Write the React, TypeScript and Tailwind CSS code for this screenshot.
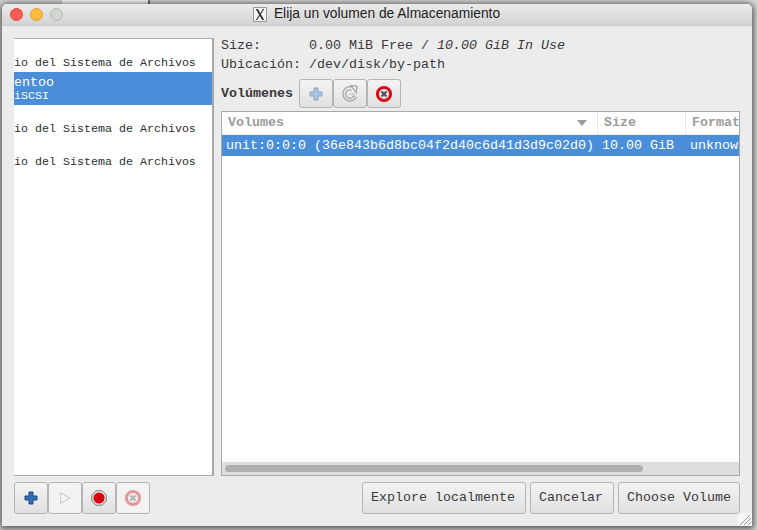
const mono = "font-['Liberation_Mono',monospace]";

function Plus({ c1, c2 }: { c1: string; c2: string }) {
  return (
    <svg width="14" height="14" viewBox="0 0 14 14">
      <path d="M5 1h4v4h4v4H9v4H5V9H1V5h4z" fill={c1} stroke={c2} strokeWidth="1" />
    </svg>
  );
}
function Reload() {
  return (
    <svg width="20" height="20" viewBox="0 0 20 20" fill="none">
      <path d="M16.5 13A7.2 7.2 0 1 1 13.5 3.5" stroke="#a4a4a4" strokeWidth="1.3" />
      <path d="M14 11.5A4.3 4.3 0 1 1 11.5 6.2" stroke="#a4a4a4" strokeWidth="1.3" />
      <path d="M15 11.5v1.5M10 10h5" stroke="#b8b8b8" strokeWidth="1" />
      <path d="M11 1.5l6 .8-.8 6.2z" fill="#f4f4f4" stroke="#a0a0a0" strokeWidth="1.2" />
    </svg>
  );
}
function Stop({ faded = false }: { faded?: boolean }) {
  return (
    <svg width="18" height="18" viewBox="0 0 18 18" className={faded ? "opacity-40" : ""}>
      <circle cx="9" cy="9" r="6.6" fill="#e8e8e8" stroke="#d40f1c" strokeWidth="3" />
      <path d="M6.5 6.5l5 5M11.5 6.5l-5 5" stroke="#555" strokeWidth="2.2" />
    </svg>
  );
}
function Record() {
  return (
    <svg width="16" height="16" viewBox="0 0 16 16">
      <path d="M5 .8h6L15.2 5v6L11 15.2H5L.8 11V5z" fill="#e8e8e8" stroke="#777" />
      <circle cx="8" cy="8" r="5.6" fill="#d8000c" />
    </svg>
  );
}
function Play() {
  return (
    <svg width="12" height="14" viewBox="0 0 12 14" fill="#f4f4f4" stroke="#cfcfcf" strokeWidth="1.2">
      <path d="M1.5 1.5l9.5 5.5-9.5 5.5z" />
    </svg>
  );
}

function IconBtn({ children, disabled, h }: { children: React.ReactNode; disabled?: boolean; h: string }) {
  return (
    <div
      className={`${h} w-[34px] flex items-center justify-center rounded-[3px] border border-[#b4b4b4] ${
        disabled ? "bg-[#f3f3f3]" : "bg-gradient-to-b from-[#f4f4f4] to-[#e0e0e0]"
      }`}
    >
      {children}
    </div>
  );
}

function TextBtn({ label, w }: { label: string; w: string }) {
  return (
    <div className={`${w} h-[32px] flex items-center justify-center rounded-[3px] border border-[#b4b4b4] bg-gradient-to-b from-[#f3f3f3] to-[#e0e0e0] text-[13.33px] text-[#3a3a3a]`}>
      {label}
    </div>
  );
}

export default function App() {
  return (
    <div className={`${mono} relative w-[757px] h-[530px] overflow-hidden bg-[#d8d8d8] pl-[2px] pt-[4px]`}>
      <div className="absolute left-[62px] top-0 w-[88px] h-[4px] bg-white border-r-2 border-[#777]" />
      <div className="relative w-[750px] h-[522px] rounded-t-[5px] bg-[#ececec] flex flex-col shadow-[0_1px_6px_2px_rgba(0,0,0,0.6)]">
        <div className="h-[22px] shrink-0 rounded-t-[5px] bg-gradient-to-b from-[#ebebeb] to-[#d3d3d3] flex items-center relative border-b border-[#cbcbcb]">
          <div className="flex items-center gap-[7px] pl-[8px]">
            <div className="w-[13px] h-[13px] rounded-full bg-[#fc5b57] border border-[#e0443e]" />
            <div className="w-[13px] h-[13px] rounded-full bg-[#fdbc40] border border-[#dea123]" />
            <div className="w-[13px] h-[13px] rounded-full bg-[#d4d4d4] border border-[#a9c1a5]" />
          </div>
          <div className="flex-1 flex items-center justify-center gap-[7px] font-['Liberation_Sans',sans-serif] text-[13.8px] text-[#222]">
            <svg width="14" height="15" viewBox="0 0 14 15" className="border border-[#999] bg-[#f4f4f4]">
              <path d="M2 1h2.5L12 14H9.5zM10.5 1H12L3.5 14H2z" fill="#333" />
            </svg>
            <span>Elija un volumen de Almacenamiento</span>
          </div>
          <div className="w-[62px]" />
        </div>

        <div className="flex-1 flex gap-[7px] pl-[12px] pr-[12px] pt-[12px]">
          <div className="w-[200px] h-[438px] bg-white border-y border-r-2 border-[#a9a9a9] overflow-hidden">
            <div className="pt-[6px]">
              <div className="h-[27px] flex items-end text-[11.67px] text-[#2e2e2e]">io del Sistema de Archivos</div>
              <div className="h-[33px] bg-[#4a8ed9] text-white flex flex-col justify-center">
                <div className="text-[13.33px] leading-[15px]">entoo</div>
                <div className="text-[11.67px] leading-[12px]">iSCSI</div>
              </div>
              <div className="h-[33px] flex items-end text-[11.67px] text-[#2e2e2e]">io del Sistema de Archivos</div>
              <div className="h-[33px] flex items-end text-[11.67px] text-[#2e2e2e]">io del Sistema de Archivos</div>
            </div>
          </div>

          <div className="w-[519px] flex flex-col">
            <div className="text-[13.33px] text-[#3a3a3a] leading-[20px] h-[20px] mt-[-2px] whitespace-pre">
              {"Size:      0.00 MiB Free / "}
              <i>10.00 GiB In Use</i>
            </div>
            <div className="text-[13.33px] text-[#3a3a3a] leading-[20px] h-[20px] mt-[-1px] whitespace-pre">Ubicación: /dev/disk/by-path</div>
            <div className="flex items-center h-[29px] mt-[4px]">
              <div className="w-[78px] text-[13.33px] font-bold text-[#3a3a3a]">Volúmenes</div>
              <IconBtn h="h-[29px]"><Plus c1="#a9c3df" c2="#8ba7c6" /></IconBtn>
              <IconBtn h="h-[29px]"><Reload /></IconBtn>
              <IconBtn h="h-[29px]"><Stop /></IconBtn>
            </div>
            <div className="mt-[3px] w-[519px] h-[365px] border border-[#a9a9a9] bg-white flex flex-col overflow-hidden">
              <div className="h-[23px] shrink-0 flex text-[13.33px] font-bold text-[#9c9c9c] border-b border-[#e8e8e8]">
                <div className="w-[376px] pl-[6px] flex items-center justify-between pr-[10px] border-r border-[#e8e8e8]">
                  <span>Volumes</span>
                  <svg width="10" height="6" viewBox="0 0 10 6"><path d="M0 0h10L5 6z" fill="#9c9c9c" /></svg>
                </div>
                <div className="w-[88px] pl-[6px] flex items-center border-r border-[#e8e8e8]">Size</div>
                <div className="w-[53px] shrink-0 pl-[6px] flex items-center overflow-hidden">Format</div>
              </div>
              <div className="h-[21px] shrink-0 flex items-center bg-[#4a8ed9] text-white text-[13.33px] whitespace-pre">
                <div className="w-[376px] pl-[4px]">unit:0:0:0 (36e843b6d8bc04f2d40c6d41d3d9c02d0)</div>
                <div className="w-[88px] pl-[4px]">10.00 GiB</div>
                <div className="w-[53px] shrink-0 pl-[4px] overflow-hidden">unknown</div>
              </div>
              <div className="flex-1" />
              <div className="h-[13px] shrink-0 bg-[#dedede] flex items-center pl-[3px]">
                <div className="w-[418px] h-[7px] rounded-full bg-[#b0b0b0]" />
              </div>
            </div>
          </div>
        </div>

        <div className="relative h-[50px] flex pl-[12px] pr-[12px] pt-[6px] justify-between shrink-0 text-[13.33px]">
          <div className="flex">
            <IconBtn h="h-[32px]"><Plus c1="#2f6db5" c2="#1d4a85" /></IconBtn>
            <IconBtn h="h-[32px]" disabled><Play /></IconBtn>
            <IconBtn h="h-[32px]"><Record /></IconBtn>
            <IconBtn h="h-[32px]" disabled><Stop faded /></IconBtn>
          </div>
          <div className="flex gap-[4px]">
            <TextBtn label="Explore localmente" w="w-[164px] pr-[2px]" />
            <TextBtn label="Cancelar" w="w-[84px] pr-[2px]" />
            <TextBtn label="Choose Volume" w="w-[122px]" />
          </div>
          <svg width="14" height="13" viewBox="0 0 14 13" className="absolute right-0 bottom-0 bg-[#f6f6f6]">
            <path d="M2 12L12 2M6 12l7-7M10 12l3-3" stroke="#9a9a9a" strokeWidth="1" />
          </svg>
        </div>
      </div>
    </div>
  );
}
